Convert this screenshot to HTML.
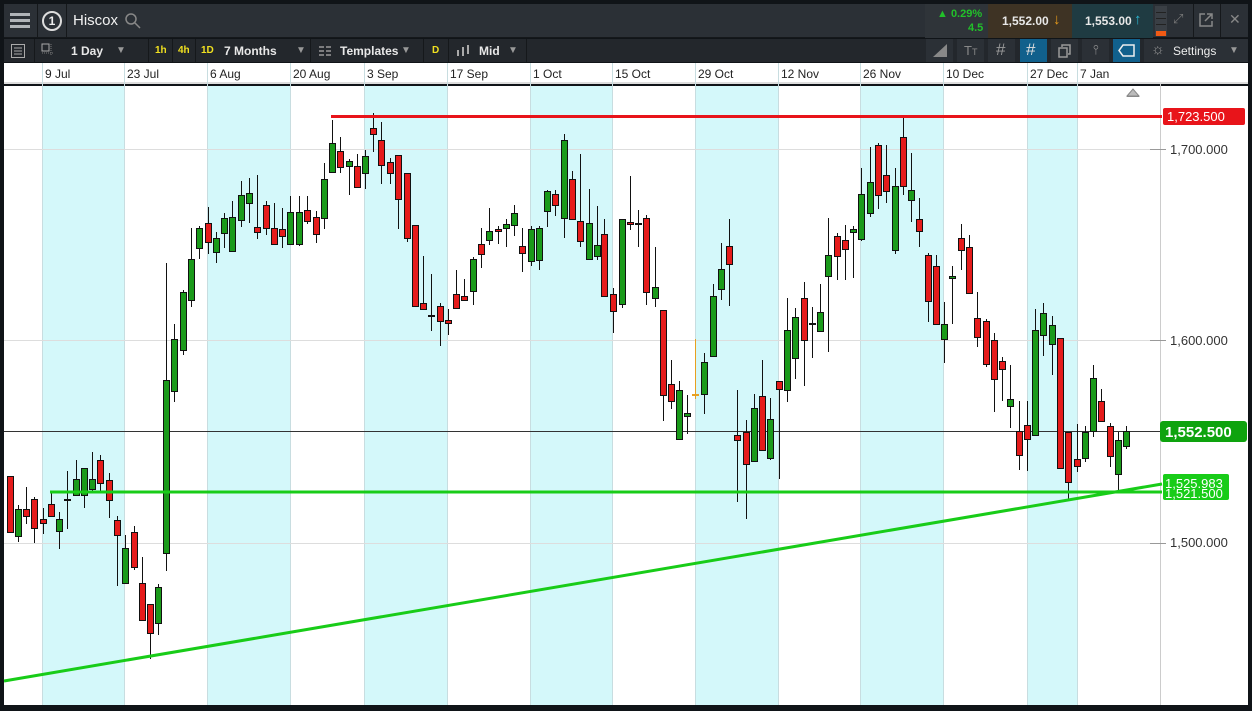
<!DOCTYPE html>
<html><head><meta charset="utf-8">
<style>
*{margin:0;padding:0;box-sizing:border-box}
body{width:1252px;height:711px;overflow:hidden;background:#101418;font-family:"Liberation Sans",sans-serif;position:relative}
.abs{position:absolute}
.top{left:4px;top:4px;width:1244px;height:34px;background:#2b3036;border-bottom:1px solid #15181b}
.bar2{left:4px;top:39px;width:1244px;height:23px;background:#23272c}
.t{color:#e8e8e8;font-size:12px;font-weight:bold;white-space:nowrap}
.sep{background:#15181b;width:1px}
.axis{left:4px;top:63px;width:1244px;height:21px;background:#fff;border-bottom:2px solid #ddd}
.axis span{position:absolute;top:4px;font-size:12px;color:#222}
.y{position:absolute;font-size:13px;color:#333;left:1170px}
.btn{position:absolute;top:39px;height:23px;width:27px;background:#2b3036}
</style></head><body>
<div class="abs top"></div>
<!-- top bar -->
<div class="abs" style="left:10px;top:13px;width:20px;height:3px;background:#b0b4b8;box-shadow:0 6px 0 #b0b4b8,0 12px 0 #b0b4b8"></div>
<div class="abs sep" style="left:37px;top:4px;height:34px"></div>
<div class="abs" style="left:42px;top:11px;width:20px;height:20px;border:2px solid #ddd;border-radius:50%;color:#eee;font-size:12px;font-weight:bold;text-align:center;line-height:16px">1</div>
<div class="abs sep" style="left:66px;top:4px;height:34px"></div>
<div class="abs" style="left:73px;top:12px;color:#f0f0f0;font-size:15px">Hiscox</div>
<svg class="abs" style="left:124px;top:12px" width="18" height="18"><circle cx="7" cy="7" r="5" fill="none" stroke="#888" stroke-width="1.5"/><line x1="11" y1="11" x2="16" y2="16" stroke="#888" stroke-width="1.5"/></svg>
<div class="abs" style="left:925px;top:4px;width:63px;height:34px;background:#2f3439"></div>
<div class="abs" style="left:937px;top:8px;color:#22c02a;font-size:11px;font-weight:bold">▲ 0.29%</div>
<div class="abs" style="left:968px;top:22px;color:#22c02a;font-size:11px;font-weight:bold">4.5</div>
<div class="abs" style="left:988px;top:4px;width:84px;height:34px;background:#3e3324"></div>
<div class="abs t" style="left:1002px;top:14px">1,552.00</div>
<div class="abs" style="left:1053px;top:11px;color:#e69a1a;font-size:15px;font-weight:bold">↓</div>
<div class="abs" style="left:1072px;top:4px;width:81px;height:34px;background:#1f3b42"></div>
<div class="abs t" style="left:1085px;top:14px">1,553.00</div>
<div class="abs" style="left:1134px;top:11px;color:#2bb4d0;font-size:15px;font-weight:bold">↑</div>
<div class="abs" style="left:1155px;top:6px;width:12px;height:30px;background:#3a3f45"></div>
<div class="abs" style="left:1156px;top:12px;width:10px;height:1px;background:#222;box-shadow:0 6px 0 #222,0 12px 0 #222"></div>
<div class="abs" style="left:1156px;top:31px;width:10px;height:5px;background:#f05a14"></div>
<div class="abs sep" style="left:1193px;top:4px;height:34px"></div>
<div class="abs sep" style="left:1220px;top:4px;height:34px"></div>
<div class="abs" style="left:1173px;top:11px;color:#777;font-size:13px">⤢</div>
<svg class="abs" style="left:1199px;top:13px" width="14" height="14"><path d="M6 1H1V13H13V8M8 1H13V6M13 1L6 8" fill="none" stroke="#888" stroke-width="1.5"/></svg>
<div class="abs" style="left:1229px;top:11px;color:#888;font-size:14px">✕</div>
<!-- bar2 -->
<div class="abs bar2"></div>
<svg class="abs" style="left:10px;top:43px" width="16" height="16"><rect x="1.5" y="1.5" width="13" height="13" fill="none" stroke="#aaa"/><path d="M4 5H12M4 8H12M4 11H12" stroke="#aaa"/></svg>
<div class="abs sep" style="left:34px;top:39px;height:23px"></div>
<svg class="abs" style="left:41px;top:43px" width="14" height="14"><rect x="1" y="1" width="7" height="7" fill="none" stroke="#aaa"/><path d="M10 1V13M1 10H13" stroke="#777" stroke-dasharray="1 1"/></svg>
<div class="abs t" style="left:71px;top:44px">1 Day</div>
<div class="abs" style="left:116px;top:45px;color:#999;font-size:10px">▼</div>
<div class="abs sep" style="left:148px;top:39px;height:23px"></div>
<div class="abs" style="left:155px;top:45px;color:#f0e020;font-size:10px;font-weight:bold">1h</div>
<div class="abs sep" style="left:172px;top:39px;height:23px"></div>
<div class="abs" style="left:178px;top:45px;color:#f0e020;font-size:10px;font-weight:bold">4h</div>
<div class="abs sep" style="left:195px;top:39px;height:23px"></div>
<div class="abs" style="left:201px;top:45px;color:#f0e020;font-size:10px;font-weight:bold">1D</div>
<div class="abs t" style="left:224px;top:44px">7 Months</div>
<div class="abs" style="left:247px;top:45px;left:296px;color:#999;font-size:10px">▼</div>
<div class="abs sep" style="left:310px;top:39px;height:23px"></div>
<svg class="abs" style="left:318px;top:44px" width="16" height="14"><path d="M1 3H15M1 7H15M1 11H15" stroke="#999" stroke-width="1.5" stroke-dasharray="5 2"/></svg>
<div class="abs t" style="left:340px;top:44px">Templates</div>
<div class="abs" style="left:338px;top:45px;left:401px;color:#999;font-size:10px">▼</div>
<div class="abs sep" style="left:423px;top:39px;height:23px"></div>
<div class="abs" style="left:432px;top:45px;color:#f0e020;font-size:10px;font-weight:bold">D</div>
<div class="abs sep" style="left:448px;top:39px;height:23px"></div>
<svg class="abs" style="left:455px;top:44px" width="16" height="14"><path d="M3 6V12M8 3V12M13 1V10" stroke="#aaa" stroke-width="2"/></svg>
<div class="abs t" style="left:479px;top:44px">Mid</div>
<div class="abs" style="left:508px;top:45px;color:#999;font-size:10px">▼</div>
<div class="abs sep" style="left:526px;top:39px;height:23px"></div>
<div class="btn" style="left:926px"></div><div class="btn" style="left:957px"></div><div class="btn" style="left:988px"></div>
<div class="btn" style="left:1020px;background:#11608c"></div><div class="btn" style="left:1051px"></div><div class="btn" style="left:1082px"></div>
<div class="btn" style="left:1113px;background:#11608c"></div>
<div class="abs" style="left:1144px;top:39px;width:104px;height:23px;background:#2b3036"></div>
<svg class="abs" style="left:932px;top:43px" width="16" height="16"><path d="M1 14H15V1Z" fill="#888"/></svg>
<div class="abs" style="left:964px;top:43px;color:#888;font-size:13px">T<span style="font-size:9px">T</span></div>
<div class="abs" style="left:996px;top:40px;color:#999;font-size:17px">#</div>
<div class="abs" style="left:1026px;top:40px;color:#ddd;font-size:17px">#</div>
<svg class="abs" style="left:1058px;top:43px" width="14" height="15"><rect x="1" y="5" width="8" height="9" fill="none" stroke="#999" stroke-width="1.5"/><path d="M4 4V2H12V11H10" fill="none" stroke="#999" stroke-width="1.5"/></svg>
<div class="abs" style="left:1093px;top:42px;color:#999;font-size:13px">⫯</div>
<svg class="abs" style="left:1118px;top:43px" width="18" height="15"><path d="M5 2H16V13H5L1 7.5Z" fill="none" stroke="#eee" stroke-width="1.5"/></svg>
<div class="abs" style="left:1151px;top:41px;color:#999;font-size:15px">☼</div>
<div class="abs t" style="left:1173px;top:44px;font-weight:normal;color:#eee">Settings</div>
<div class="abs" style="left:1229px;top:45px;color:#999;font-size:10px">▼</div>
<!-- axis -->
<div class="abs axis">
<span style="left:41px">9 Jul</span><span style="left:123px">23 Jul</span><span style="left:206px">6 Aug</span><span style="left:289px">20 Aug</span><span style="left:363px">3 Sep</span><span style="left:446px">17 Sep</span><span style="left:529px">1 Oct</span><span style="left:611px">15 Oct</span><span style="left:694px">29 Oct</span><span style="left:777px">12 Nov</span><span style="left:859px">26 Nov</span><span style="left:942px">10 Dec</span><span style="left:1026px">27 Dec</span><span style="left:1076px">7 Jan</span>
</div>
<div class="abs" style="left:4px;top:86px;width:1244px;height:619px;background:#fff"></div>
<svg class="abs" style="left:0;top:0" width="1252" height="711" id="ch">
<g fill="#d4f8fa"><rect x="42" y="86" width="82" height="619"/><rect x="207" y="86" width="83" height="619"/><rect x="364" y="86" width="83" height="619"/><rect x="530" y="86" width="82" height="619"/><rect x="695" y="86" width="83" height="619"/><rect x="860" y="86" width="83" height="619"/><rect x="1027" y="86" width="50" height="619"/></g>
<g stroke="#c8dde0" stroke-width="1"><path d="M42.5 63V705M124.5 63V705M207.5 63V705M290.5 63V705M364.5 63V705M447.5 63V705M530.5 63V705M612.5 63V705M695.5 63V705M778.5 63V705M860.5 63V705M943.5 63V705M1027.5 63V705M1077.5 63V705"/></g>
<g stroke="#ddd"><path d="M4 149.5H1160M4 340.5H1160M4 543.5H1160"/></g>
<path d="M1160.5 84V705" stroke="#ccc"/>
<path d="M1150 149.5H1166M1150 340.5H1166M1150 543.5H1166" stroke="#999"/>
<path d="M4 431.5H1160" stroke="#333" stroke-width="1"/>
<g id="cd" stroke="#111" stroke-width="1"></g>
<line x1="331" y1="116.5" x2="1162" y2="116.5" stroke="#e8141a" stroke-width="3"/>
<line x1="50" y1="492" x2="1162" y2="492" stroke="#18cc18" stroke-width="3"/>
<line x1="4" y1="681" x2="1162" y2="484" stroke="#18cc18" stroke-width="3"/>
<path d="M1127 96L1133 89L1139 96Z" fill="#bbb" stroke="#888"/>
<rect x="1127" y="96" width="12" height="1" fill="#888"/>
<rect x="1163" y="108" width="82" height="17" rx="2" fill="#e8141a"/>
<text x="1167" y="121" font-size="13" fill="#fff" font-family="Liberation Sans">1,723.500</text>
<rect x="1160" y="421" width="87" height="21" rx="3" fill="#0ea30e"/>
<text x="1165" y="437" font-size="15" font-weight="bold" fill="#fff" font-family="Liberation Sans">1,552.500</text>
<rect x="1163" y="474" width="66" height="26" rx="2" fill="#18cc18"/>
<text x="1165" y="498" font-size="13" fill="#fff" font-family="Liberation Sans">1,521.500</text>
<text x="1165" y="488" font-size="13" fill="#fff" font-family="Liberation Sans">1,525.983</text>
<g font-size="13" fill="#333" font-family="Liberation Sans"><text x="1170" y="154">1,700.000</text><text x="1170" y="345">1,600.000</text><text x="1170" y="547">1,500.000</text></g>
</svg>
<script>
var d=[
[10,476,476,532,532,'r'],[18,505,509,536,542,'g'],[26,487,509,516,524,'r'],[34,497,499,528,543,'r'],[43,508,519,523,534,'r'],[51,493,504,516,516,'r'],[59,512,519,531,549,'g'],[67,471,499,501,529,'k'],[76,460,479,495,496,'g'],[84,468,468,495,508,'g'],[92,452,479,489,491,'g'],[100,455,460,483,491,'r'],[109,473,480,500,518,'r'],[117,516,520,535,586,'r'],[125,535,548,583,583,'g'],[134,526,532,567,570,'r'],[142,557,583,620,620,'r'],[150,604,604,633,659,'r'],[158,584,587,623,635,'g'],[166,263,380,553,571,'g'],[174,324,339,391,402,'g'],[183,290,292,350,355,'g'],[191,228,259,300,307,'g'],[199,226,228,248,259,'g'],[208,207,223,242,254,'r'],[216,232,238,252,263,'g'],[224,213,218,233,248,'g'],[232,201,217,251,251,'g'],[241,181,195,220,227,'g'],[249,178,193,203,223,'g'],[257,175,227,232,239,'r'],[266,201,205,228,235,'r'],[274,203,228,244,244,'r'],[282,208,229,236,248,'r'],[290,196,212,244,245,'g'],
[299,196,212,244,246,'g'],[307,196,210,221,224,'r'],[316,211,217,234,243,'r'],[324,163,179,218,229,'g'],[332,120,143,172,173,'g'],[340,137,151,167,173,'r'],[349,159,161,166,195,'g'],[357,154,166,187,187,'r'],[365,150,156,173,189,'g'],[373,113,128,134,152,'r'],[381,122,140,165,184,'r'],[390,158,162,173,184,'r'],[398,155,155,199,229,'r'],[407,173,173,238,242,'r'],[415,225,225,306,306,'r'],[423,256,303,309,309,'r'],[431,274,315,317,331,'k'],[440,303,306,321,346,'r'],[448,309,320,323,335,'r'],[456,270,294,308,308,'r'],[464,279,296,300,301,'r'],[473,257,259,291,305,'g'],[481,228,244,254,268,'r'],[489,208,231,240,245,'g'],[498,226,229,231,244,'r'],[506,219,224,228,247,'g'],[514,205,213,225,236,'g'],[522,228,246,253,272,'r'],[531,226,229,261,266,'g'],[539,226,228,260,270,'g'],[547,190,191,211,227,'g'],[555,190,194,205,216,'r'],[564,134,140,218,238,'g'],[572,171,179,219,219,'r'],[580,154,221,241,247,'r'],
[589,189,223,259,259,'g'],[597,206,245,256,260,'g'],[604,219,234,296,297,'r'],[613,288,294,311,333,'r'],[622,219,219,304,308,'g'],[630,176,222,224,230,'r'],[638,210,223,225,247,'k'],[646,215,218,292,305,'r'],[655,247,287,298,307,'g'],[663,310,310,395,421,'r'],[671,360,384,401,409,'r'],[679,381,390,439,439,'g'],[687,395,413,416,434,'g'],[695,339,394,396,399,'o'],[704,353,362,394,414,'g'],[713,284,296,356,356,'g'],[721,243,269,289,300,'g'],[729,219,246,264,306,'r'],
[737,390,435,440,502,'r'],[746,420,432,464,519,'r'],[754,394,408,461,461,'g'],[762,360,396,450,450,'r'],[770,398,419,458,460,'g'],[779,381,381,389,479,'r'],[787,298,330,390,402,'g'],[795,308,317,358,379,'g'],[804,282,298,340,386,'r'],[812,307,323,325,358,'k'],[820,284,312,331,332,'g'],[828,218,255,276,352,'g'],[837,233,236,256,280,'r'],[845,225,240,249,280,'r'],[853,226,229,232,278,'g'],[861,168,194,239,241,'g'],[870,147,182,213,217,'g'],[878,143,145,195,209,'r'],
[886,145,175,191,203,'r'],[895,168,186,250,254,'g'],[903,117,137,186,195,'r'],[911,153,190,200,222,'g'],[919,198,219,231,247,'r'],[928,253,255,301,322,'r'],[936,255,266,324,324,'r'],[944,302,324,339,363,'g'],[952,266,276,278,324,'g'],[961,224,238,250,270,'r'],[969,235,247,293,294,'r'],[977,292,318,337,347,'r'],[986,319,321,364,367,'r'],[994,333,340,379,412,'r'],[1002,357,361,369,401,'r'],[1010,365,399,406,428,'g'],[1019,401,431,455,470,'r'],[1027,401,425,439,471,'r'],[1035,309,330,435,435,'g'],[1043,303,313,335,356,'g'],[1052,316,325,344,375,'g'],[1060,338,338,468,468,'r'],[1068,432,432,482,499,'r'],[1077,424,459,466,472,'r'],[1085,426,432,458,462,'g'],[1093,365,378,431,437,'g'],[1101,389,401,421,421,'r'],[1110,423,426,456,467,'r'],[1118,432,440,474,490,'g'],[1126,426,431,446,449,'g']];
var s='',col={r:'#e51b1b',g:'#1a9a1a',k:'#111',o:'#e8a020'};
d.forEach(function(c){var x=c[0]+0.5,st=c[5]=='o'?'#e8a020':'#111';
s+='<line x1="'+x+'" y1="'+c[1]+'" x2="'+x+'" y2="'+c[4]+'" stroke="'+st+'"/>';
var h=Math.max(c[3]-c[2],1);
if(c[5]=='k'||c[5]=='o'){s+='<rect x="'+(c[0]-3)+'" y="'+c[2]+'" width="7" height="'+Math.max(h,2)+'" fill="'+col[c[5]]+'" stroke="none"/>';}
else s+='<rect x="'+(c[0]-2.5)+'" y="'+(c[2]+0.5)+'" width="6" height="'+h+'" fill="'+col[c[5]]+'"/>';});
document.getElementById('cd').innerHTML=s;
</script>
</body></html>
